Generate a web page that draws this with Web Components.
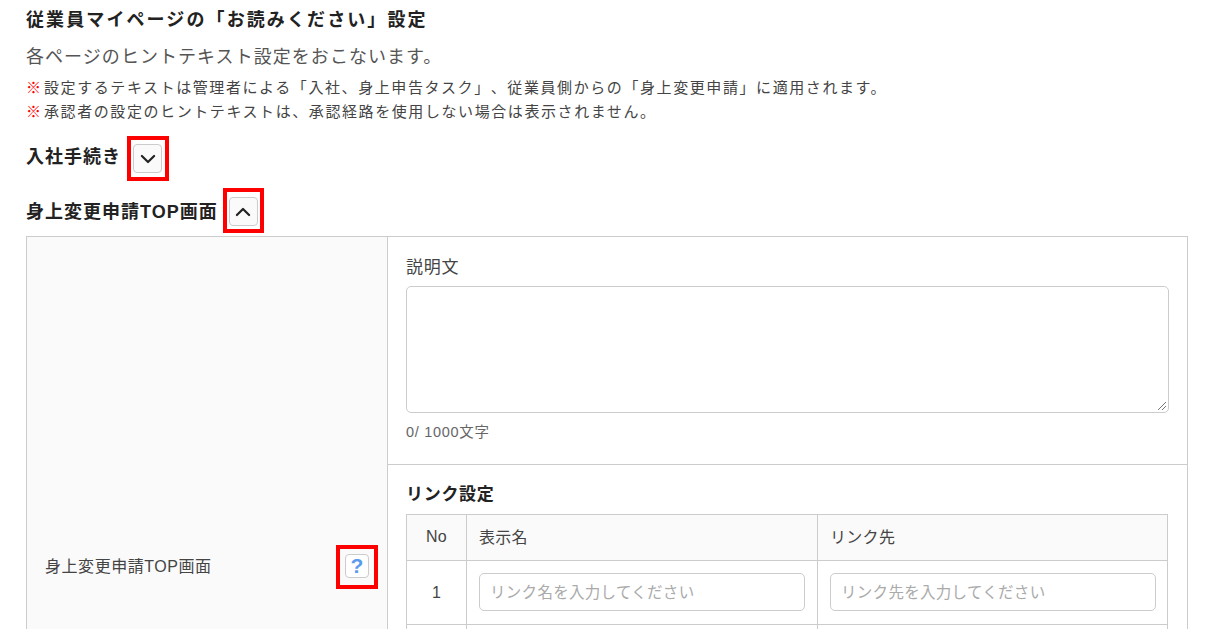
<!DOCTYPE html>
<html lang="ja"><head><meta charset="utf-8">
<style>
html,body{margin:0;padding:0;background:#fff;height:629px;overflow:hidden}
body{font-family:"Liberation Sans","Noto Sans CJK JP",sans-serif;color:#333;text-spacing-trim:space-all}
</style></head><body>
<settings-page></settings-page>
<script>
function def(name, html){
  customElements.define(name, class extends HTMLElement{
    constructor(){super();this.attachShadow({mode:'open'}).innerHTML=html;}
  });
}
const chev=d=>`<svg width="14" height="14" viewBox="0 0 14 14" fill="none" stroke="#222" stroke-width="2.2" stroke-linecap="round" stroke-linejoin="round" style="overflow:visible"><path d="${d}"/></svg>`;
def('toggle-button',`<style>
:host{display:inline-flex;width:29px;height:29px;box-sizing:border-box;border:1px solid #ccc;border-radius:4px;background:#fafafa;align-items:center;justify-content:center;position:relative}
.mark{position:absolute;left:-7px;top:-9px;width:42px;height:45px;box-sizing:border-box;border:4px solid #f00}
:host([wide]) .mark{left:-7px;top:-10px;width:41px;height:45px}
</style><slot></slot><span class="mark" part="mark"></span>`);
def('section-heading',`<style>
:host{display:flex;align-items:center;gap:var(--gap,12px);font-size:18px;font-weight:700;color:#222;letter-spacing:1px}
.t{padding-bottom:var(--lift,3px)}
</style><span class="t"><slot></slot></span><slot name="btn"></slot>`);
def('row-label',`<style>
:host{display:flex;align-items:center;justify-content:space-between;background:#fafafa;box-sizing:border-box;padding:0 18px 0 18px;font-size:16px;letter-spacing:.55px;color:#444;border-right:1px solid #ccc}
.tx{padding-bottom:2px}
.help{width:24px;height:24px;box-sizing:border-box;border:1px solid #ccc;border-radius:4px;background:#fff;color:#5a9bf0;font:700 21px/22px "Liberation Sans",sans-serif;letter-spacing:0;text-align:center;position:relative}
.mark{position:absolute;left:-10px;top:-10px;width:42px;height:44px;box-sizing:border-box;border:4px solid #f00}
</style><span class="tx"><slot></slot></span><span class="help">?<span class="mark"></span></span>`);
def('link-table',`<style>
:host{display:block;font-size:16px;color:#444;letter-spacing:.3px}
.g{display:grid;grid-template-columns:59px 351px 1fr;border:solid #ccc;border-width:1px 1px 0 1px;box-sizing:border-box;width:762px}
.c{box-sizing:border-box;border-bottom:1px solid #ccc;border-left:1px solid #ccc;display:flex;align-items:center}
.c.f{border-left:0;justify-content:center}
.h{height:46px;background:#fafafa;padding:0 0 3px 12px}
.h.f{padding:0 0 2px}
.r{height:64px;padding:0 12px 2px 12px}
.r.l{padding-right:11px}
.r.f{padding:0}
.i{flex:1;height:38px;box-sizing:border-box;border:1px solid #ccc;border-radius:5px;padding:0 10px 2px;display:flex;align-items:center;color:#aaa;background:#fff;font-size:15.5px}
</style><div class="g">
<div class="c f h">No</div><div class="c h">表示名</div><div class="c h">リンク先</div>
<div class="c f r">1</div><div class="c r"><div class="i">リンク名を入力してください</div></div><div class="c r l"><div class="i">リンク先を入力してください</div></div>
<div class="c f r"></div><div class="c r"></div><div class="c r l"></div>
</div>`);
def('settings-page',`<style>
:host{display:block;padding:0 22px 0 26px;height:629px;box-sizing:border-box;overflow:hidden}
h1{margin:0;font-size:18px;line-height:24px;font-weight:700;color:#222;letter-spacing:2.1px;padding-top:8px}
.sub{font-size:18px;line-height:26px;letter-spacing:1.05px;color:#555;margin-top:12px}
.note{font-size:15px;line-height:24px;color:#444;letter-spacing:1.58px;white-space:nowrap}
.note b{color:#f00;font-weight:900;letter-spacing:0;font-size:15px;margin-right:3px}
.notes{margin-top:6px}
.s1{margin-top:19px;height:31px;--lift:7px}.s2{margin-top:22px;height:31px;--gap:11px}
.box{margin-top:9px;border:1px solid #ccc;display:grid;grid-template-columns:361px 1fr;height:660px;box-sizing:border-box;}
.top{padding:19px 18px 0;height:228px;box-sizing:border-box;border-bottom:1px solid #ccc}
.lab{font-size:17px;line-height:24px;color:#444;letter-spacing:.8px}
.ta{margin-top:6px;height:127px;box-sizing:border-box;border:1px solid #ccc;border-radius:5px;position:relative}
.cnt{font-size:14.5px;color:#666;margin-top:9px;line-height:20px;letter-spacing:.7px}
.rz{position:absolute;right:1px;bottom:1px}
.bot{padding:18px 18px 0}
.bl{font-size:17px;font-weight:700;color:#222;line-height:24px;margin-bottom:7px;letter-spacing:.7px}
</style>
<h1>従業員マイページの「お読みください」設定</h1>
<div class="sub">各ページのヒントテキスト設定をおこないます。</div>
<div class="notes">
<div class="note"><b>※</b>設定するテキストは管理者による「入社、身上申告タスク」、従業員側からの「身上変更申請」に適用されます。</div>
<div class="note"><b>※</b>承認者の設定のヒントテキストは、承認経路を使用しない場合は表示されません。</div>
</div>
<section-heading class="s1">入社手続き<toggle-button slot="btn">${chev('M.9 4L7 10 13.1 4')}</toggle-button></section-heading>
<section-heading class="s2">身上変更申請TOP画面<toggle-button slot="btn" wide>${chev('M.9 10L7 4 13.1 10')}</toggle-button></section-heading>
<div class="box">
<row-label>身上変更申請TOP画面</row-label>
<div>
<div class="top"><div class="lab">説明文</div><div class="ta"><svg class="rz" width="10" height="10" viewBox="0 0 10 10" stroke="#777" fill="none"><path d="M1 9L9 1M5 9L9 5"/></svg></div><div class="cnt">0/ 1000文字</div></div>
<div class="bot"><div class="bl">リンク設定</div><link-table></link-table></div>
</div>
</div>`);
</script>
</body></html>
